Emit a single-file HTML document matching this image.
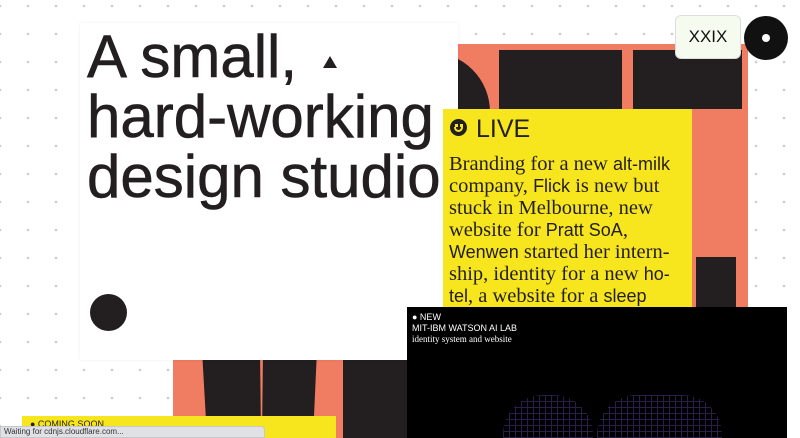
<!DOCTYPE html>
<html><head><meta charset="utf-8"><style>
*{margin:0;padding:0;box-sizing:border-box}
body{width:800px;height:438px;overflow:hidden;position:relative;background:#fff;font-family:"Liberation Sans",sans-serif;
background-image:radial-gradient(circle,#cfcfcf 1.1px,transparent 1.6px);background-size:28px 28px;background-position:14px -8px}
.a{position:absolute}
.s{font-family:'Liberation Sans',sans-serif;font-size:18px}
</style></head><body>
<div class="a" style="left:173px;top:44px;width:575px;height:394px;background:#f07c62"></div>
<div class="a" style="left:499px;top:50px;width:123px;height:260px;background:#231f20"></div>
<div class="a" style="left:633px;top:50px;width:109px;height:59px;background:#231f20"></div>
<div class="a" style="left:696px;top:257px;width:40px;height:60px;background:#231f20"></div>
<div class="a" style="left:400px;top:52px;width:90px;height:120px;background:#231f20;border-radius:0 60px 0 0"></div>
<div class="a" style="left:343px;top:340px;width:70px;height:98px;background:#231f20"></div>
<svg class="a" style="left:200px;top:350px" width="180" height="88"><polygon points="2,0 60,0 61,88 7,88" fill="#231f20"/><polygon points="63,0 117,0 113,88 62,88" fill="#231f20"/></svg>
<div class="a" style="left:80px;top:23px;width:378px;height:337px;background:#fff;box-shadow:0 0 3px rgba(0,0,0,.08)"></div>
<div class="a" style="left:87px;top:27px;font-size:60px;line-height:60px;color:#231f20;white-space:nowrap;letter-spacing:0px;-webkit-text-stroke:0.6px #231f20">A small,<br>hard-working<br>design studio,</div>
<svg class="a" style="left:322px;top:55px" width="16" height="14"><polygon points="8,1 15,13 1,13" fill="#231f20"/></svg>
<div class="a" style="left:90px;top:294px;width:37px;height:37px;border-radius:50%;background:#231f20"></div>
<div class="a" style="left:443px;top:109px;width:249px;height:198px;background:#f7e51e;overflow:hidden">
<div style="position:absolute;left:7px;top:10px;width:17px;height:17px;border-radius:50%;background:#231f20"></div>
<div style="position:absolute;left:12px;top:15px;width:2.5px;height:3px;background:#f7e51e"></div>
<div style="position:absolute;left:17px;top:15px;width:2.5px;height:3px;background:#f7e51e"></div>
<div style="position:absolute;left:11px;top:18px;width:9px;height:5px;border:2px solid #f7e51e;border-top:none;border-radius:0 0 6px 6px"></div>
<div style="position:absolute;left:33px;top:6px;font-size:25px;color:#231f20">LIVE</div>
<div style="position:absolute;left:6px;top:44px;width:245px;font-family:'Liberation Serif',serif;font-size:20.5px;line-height:22px;color:#231f20;letter-spacing:0px;white-space:nowrap">Branding for a new <span class="s">alt-milk</span><br>company, <span class="s">Flick</span> is new but<br>stuck in Melbourne, new<br>website for <span class="s">Pratt SoA</span>,<br><span class="s">Wenwen</span> started her intern-<br>ship, identity for a new <span class="s">ho-</span><br><span class="s">tel</span>, a website for a <span class="s">sleep</span></div>
</div>
<div class="a" style="left:407px;top:307px;width:380px;height:131px;background:#000;overflow:hidden">
<div style="position:absolute;left:5px;top:5px;color:#fff;font-size:9px;line-height:11px">● NEW<br>MIT-IBM WATSON AI LAB<br><span style="font-family:'Liberation Serif',serif">identity system and website</span></div>
<div style="position:absolute;left:96px;top:88px;width:90px;height:50px;border-radius:40px 40px 0 0;background-image:linear-gradient(#2a1f4a 1px,transparent 1px),linear-gradient(90deg,#2a1f4a 1px,transparent 1px);background-size:6px 6px"></div>
<div style="position:absolute;left:190px;top:88px;width:125px;height:50px;border-radius:40px 40px 0 0;background-image:linear-gradient(#2a1f4a 1px,transparent 1px),linear-gradient(90deg,#2a1f4a 1px,transparent 1px);background-size:6px 6px"></div>
</div>
<div class="a" style="left:675px;top:15px;width:66px;height:44px;background:#f6fbef;border:1px solid #ddd;border-radius:6px;font-size:17px;line-height:42px;text-align:center;color:#111">XXIX</div>
<div class="a" style="left:744px;top:16px;width:44px;height:44px;border-radius:50%;background:#111"></div>
<div class="a" style="left:762px;top:34px;width:8px;height:8px;border-radius:50%;background:#fff"></div>
<div class="a" style="left:22px;top:416px;width:314px;height:22px;background:#f7e51e;font-size:9px;padding:3px 8px;color:#231f20">● COMING SOON</div>
<div class="a" style="left:0;top:426px;width:265px;height:12px;background:#dfe1e5;border:1px solid #c6c8cc;border-radius:0 4px 0 0;font-size:8px;line-height:10px;padding-left:3px;color:#333">Waiting for cdnjs.cloudflare.com...</div>
</body></html>
